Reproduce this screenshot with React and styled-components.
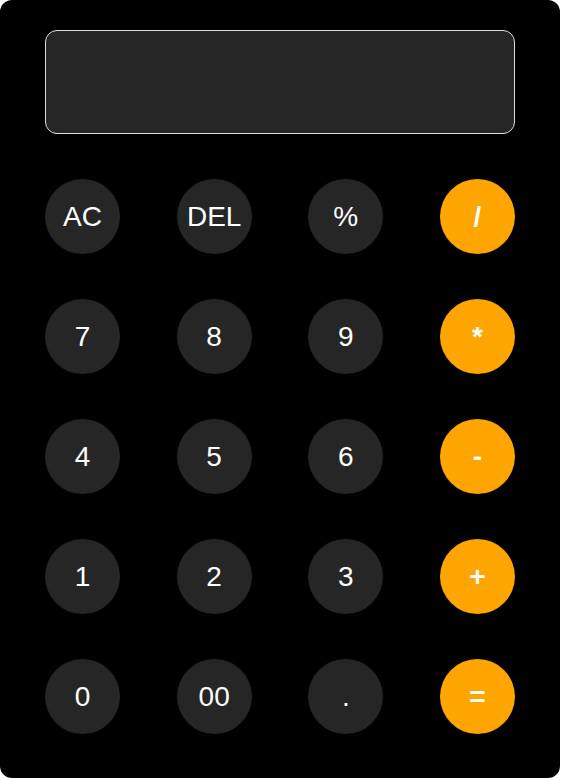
import React, { useState } from 'react'
import styled, { createGlobalStyle } from 'styled-components'

const GlobalStyle = createGlobalStyle`
    body {
        margin: 0;
        background: #ffffff;
        font-family: "Liberation Sans", Arial, sans-serif;
    }
`

const Calculator = styled.div`
    box-sizing: border-box;
    width: 560px;
    padding: 30px 45px 44px;
    background-color: #000000;
    border-radius: 12px;
    display: flex;
    flex-direction: column;
    gap: 45px;
`

const Display = styled.div`
    box-sizing: border-box;
    height: 104px;
    background-color: #262626;
    border: 1px solid #dddddd;
    border-radius: 12px;
    color: #ffffff;
    font-size: 40px;
    display: flex;
    align-items: center;
    justify-content: flex-end;
    padding: 0 20px;
`

const Keys = styled.div`
    display: grid;
    grid-template-columns: repeat(4, 75px);
    justify-content: space-between;
    row-gap: 45px;
`

const Key = styled.button`
    width: 75px;
    height: 75px;
    border: none;
    border-radius: 50%;
    padding: 0;
    background-color: ${props => props.$op ? '#ffa500' : '#262626'};
    color: #ffffff;
    font-family: "Liberation Sans", Arial, sans-serif;
    font-size: 28px;
    font-weight: ${props => props.$op ? 'bold' : 'normal'};
    cursor: pointer;
`

const KEYS = [
    'AC', 'DEL', '%', '/',
    '7', '8', '9', '*',
    '4', '5', '6', '-',
    '1', '2', '3', '+',
    '0', '00', '.', '=',
]

const OPS = ['/', '*', '-', '+', '=']

function App () {
    const [value, setValue] = useState('')

    const press = key => {
        if (key === 'AC') return setValue('')
        if (key === 'DEL') return setValue(value.slice(0, -1))
        if (key === '=') {
            try {
                // eslint-disable-next-line no-new-func
                setValue(String(Function('return (' + value + ')')()))
            } catch (e) {
                setValue('')
            }
            return
        }
        setValue(value + key)
    }

    return (
        <>
            <GlobalStyle/>
            <Calculator>
                <Display>{value}</Display>
                <Keys>
                    {KEYS.map(key => (
                        <Key key={key} $op={OPS.includes(key)} onClick={() => press(key)}>
                            {key}
                        </Key>
                    ))}
                </Keys>
            </Calculator>
        </>
    )
}

export default App
